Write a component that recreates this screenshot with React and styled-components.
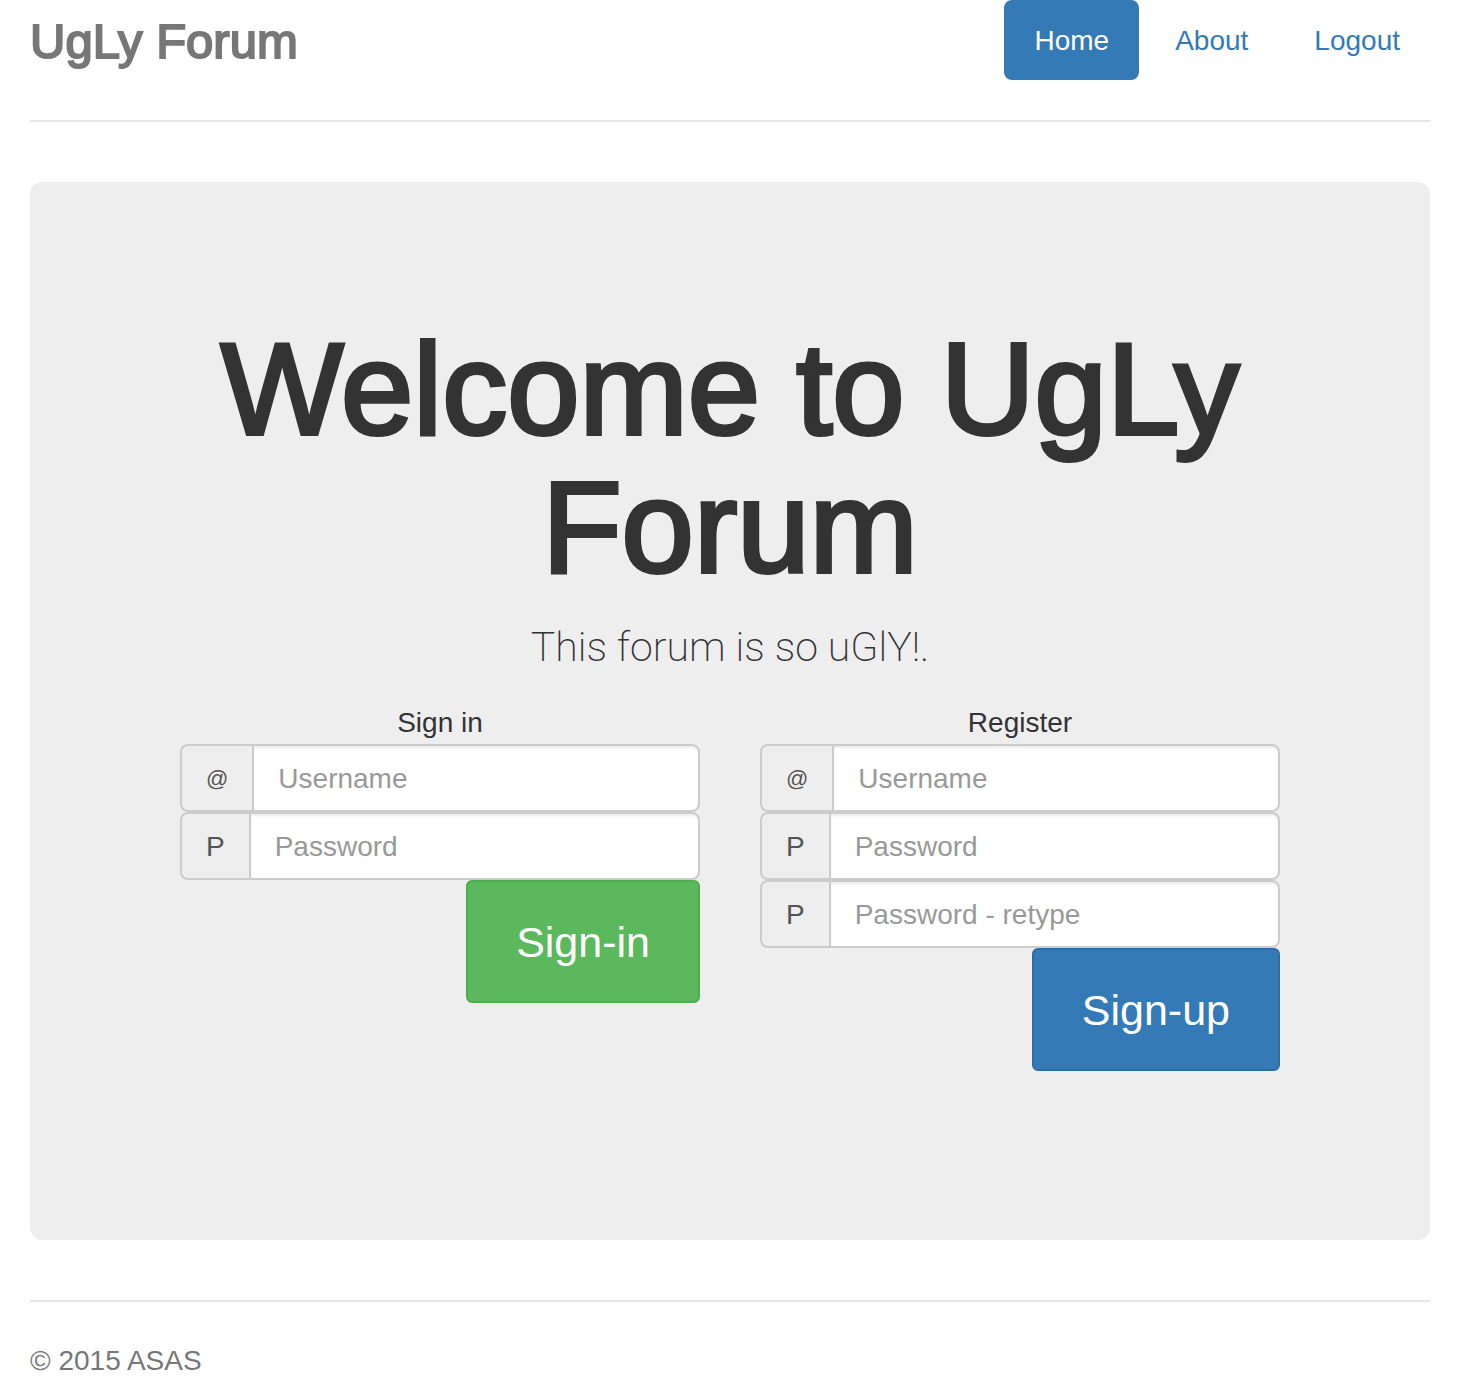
import React from "react";
import styled, { createGlobalStyle, css } from "styled-components";

const GlobalStyle = createGlobalStyle`
  *, *::before, *::after { box-sizing: border-box; }
  body {
    margin: 0;
    background: #fff;
    color: #333;
    font-family: "Liberation Sans", Arial, sans-serif;
    font-size: 28px;
    line-height: 42px;
  }
  button, input { font-family: inherit; }
`;

const Page = styled.div`
  max-width: 1460px;
  margin: 0 auto;
  padding: 0 30px;
`;

const Header = styled.header`
  display: flex;
  justify-content: space-between;
  align-items: flex-start;
  padding-bottom: 40px;
  margin-bottom: 60px;
  border-bottom: 2px solid #e5e5e5;
`;

const Brand = styled.h3`
  margin: 0;
  padding-top: 2px;
  font-size: 49px;
  line-height: 78px;
  font-weight: 500;
  color: #777;
  -webkit-text-stroke: 2px #777;
`;

const Nav = styled.nav`
  display: flex;
  gap: 6px;
`;

const NavLink = styled.a`
  padding: 20px 30px 18px;
  border-radius: 8px;
  text-decoration: none;
  color: ${(p) => (p.$active ? "#fff" : "#337ab7")};
  background: ${(p) => (p.$active ? "#337ab7" : "transparent")};
`;

const Jumbotron = styled.main`
  padding: 138px 120px 169px;
  margin-bottom: 60px;
  border-radius: 12px;
  background: #eee;
  text-align: center;
`;

const Title = styled.h1`
  margin: 0 0 21px;
  font-size: 130px;
  line-height: 138px;
  font-weight: 500;
  -webkit-text-stroke: 4px #333;
`;

const Lead = styled.p`
  margin: 0 0 23px;
  font-family: Roboto, "Liberation Sans", sans-serif;
  font-size: 41px;
  line-height: 60px;
  font-weight: 200;
`;

const Columns = styled.div`
  display: grid;
  grid-template-columns: 1fr 1fr;
  align-items: start;
`;

const Form = styled.form`
  display: flex;
  flex-direction: column;
  padding: 0 30px;
`;

const FormTitle = styled.span`
  padding-top: 2px;
`;

const InputGroup = styled.div`
  display: flex;
  height: 68px;
`;

const Addon = styled.label`
  display: flex;
  align-items: center;
  padding: 2px 24px 0;
  border: 2px solid #ccc;
  border-right: 0;
  border-radius: 8px 0 0 8px;
  background: #eee;
  color: #555;
  font-size: ${(p) => (p.$symbol ? "22px" : "28px")};
`;

const Field = styled.input`
  flex: 1;
  min-width: 0;
  padding: 14px 24px 12px;
  border: 2px solid #ccc;
  border-radius: 0 8px 8px 0;
  background: #fff;
  box-shadow: inset 0 2px 2px rgba(0, 0, 0, 0.075);
  color: #555;
  font-size: 28px;
  &::placeholder { color: #999; opacity: 1; }
`;

const tones = {
  success: css`background: #5cb85c; border-color: #4cae4c;`,
  primary: css`background: #337ab7; border-color: #2e6da4;`,
};

const Button = styled.button`
  align-self: flex-end;
  padding: 28px 48px 27px;
  border: 2px solid;
  border-radius: 6px;
  color: #fff;
  font-size: 43px;
  line-height: 64px;
  ${(p) => tones[p.$tone]}
`;

const Footer = styled.footer`
  padding: 38px 0 16px;
  border-top: 2px solid #e5e5e5;
  color: #777;
`;

function Entry({ id, mark, label, type = "text" }) {
  return (
    <InputGroup>
      <Addon htmlFor={id} $symbol={mark === "@"}>{mark}</Addon>
      <Field id={id} type={type} placeholder={label} />
    </InputGroup>
  );
}

export default function App() {
  return (
    <>
      <GlobalStyle />
      <Page>
        <Header>
          <Brand>UgLy Forum</Brand>
          <Nav>
            <NavLink href="#home" $active>Home</NavLink>
            <NavLink href="#about">About</NavLink>
            <NavLink href="#logout">Logout</NavLink>
          </Nav>
        </Header>
        <Jumbotron>
          <Title>Welcome to UgLy Forum</Title>
          <Lead>This forum is so uGlY!.</Lead>
          <Columns>
            <Form>
              <FormTitle>Sign in</FormTitle>
              <Entry id="login-user" mark="@" label="Username" />
              <Entry id="login-pass" mark="P" label="Password" type="password" />
              <Button type="button" $tone="success">Sign-in</Button>
            </Form>
            <Form>
              <FormTitle>Register</FormTitle>
              <Entry id="reg-user" mark="@" label="Username" />
              <Entry id="reg-pass" mark="P" label="Password" type="password" />
              <Entry id="reg-again" mark="P" label="Password - retype" type="password" />
              <Button type="button" $tone="primary">Sign-up</Button>
            </Form>
          </Columns>
        </Jumbotron>
        <Footer>© 2015 ASAS</Footer>
      </Page>
    </>
  );
}
